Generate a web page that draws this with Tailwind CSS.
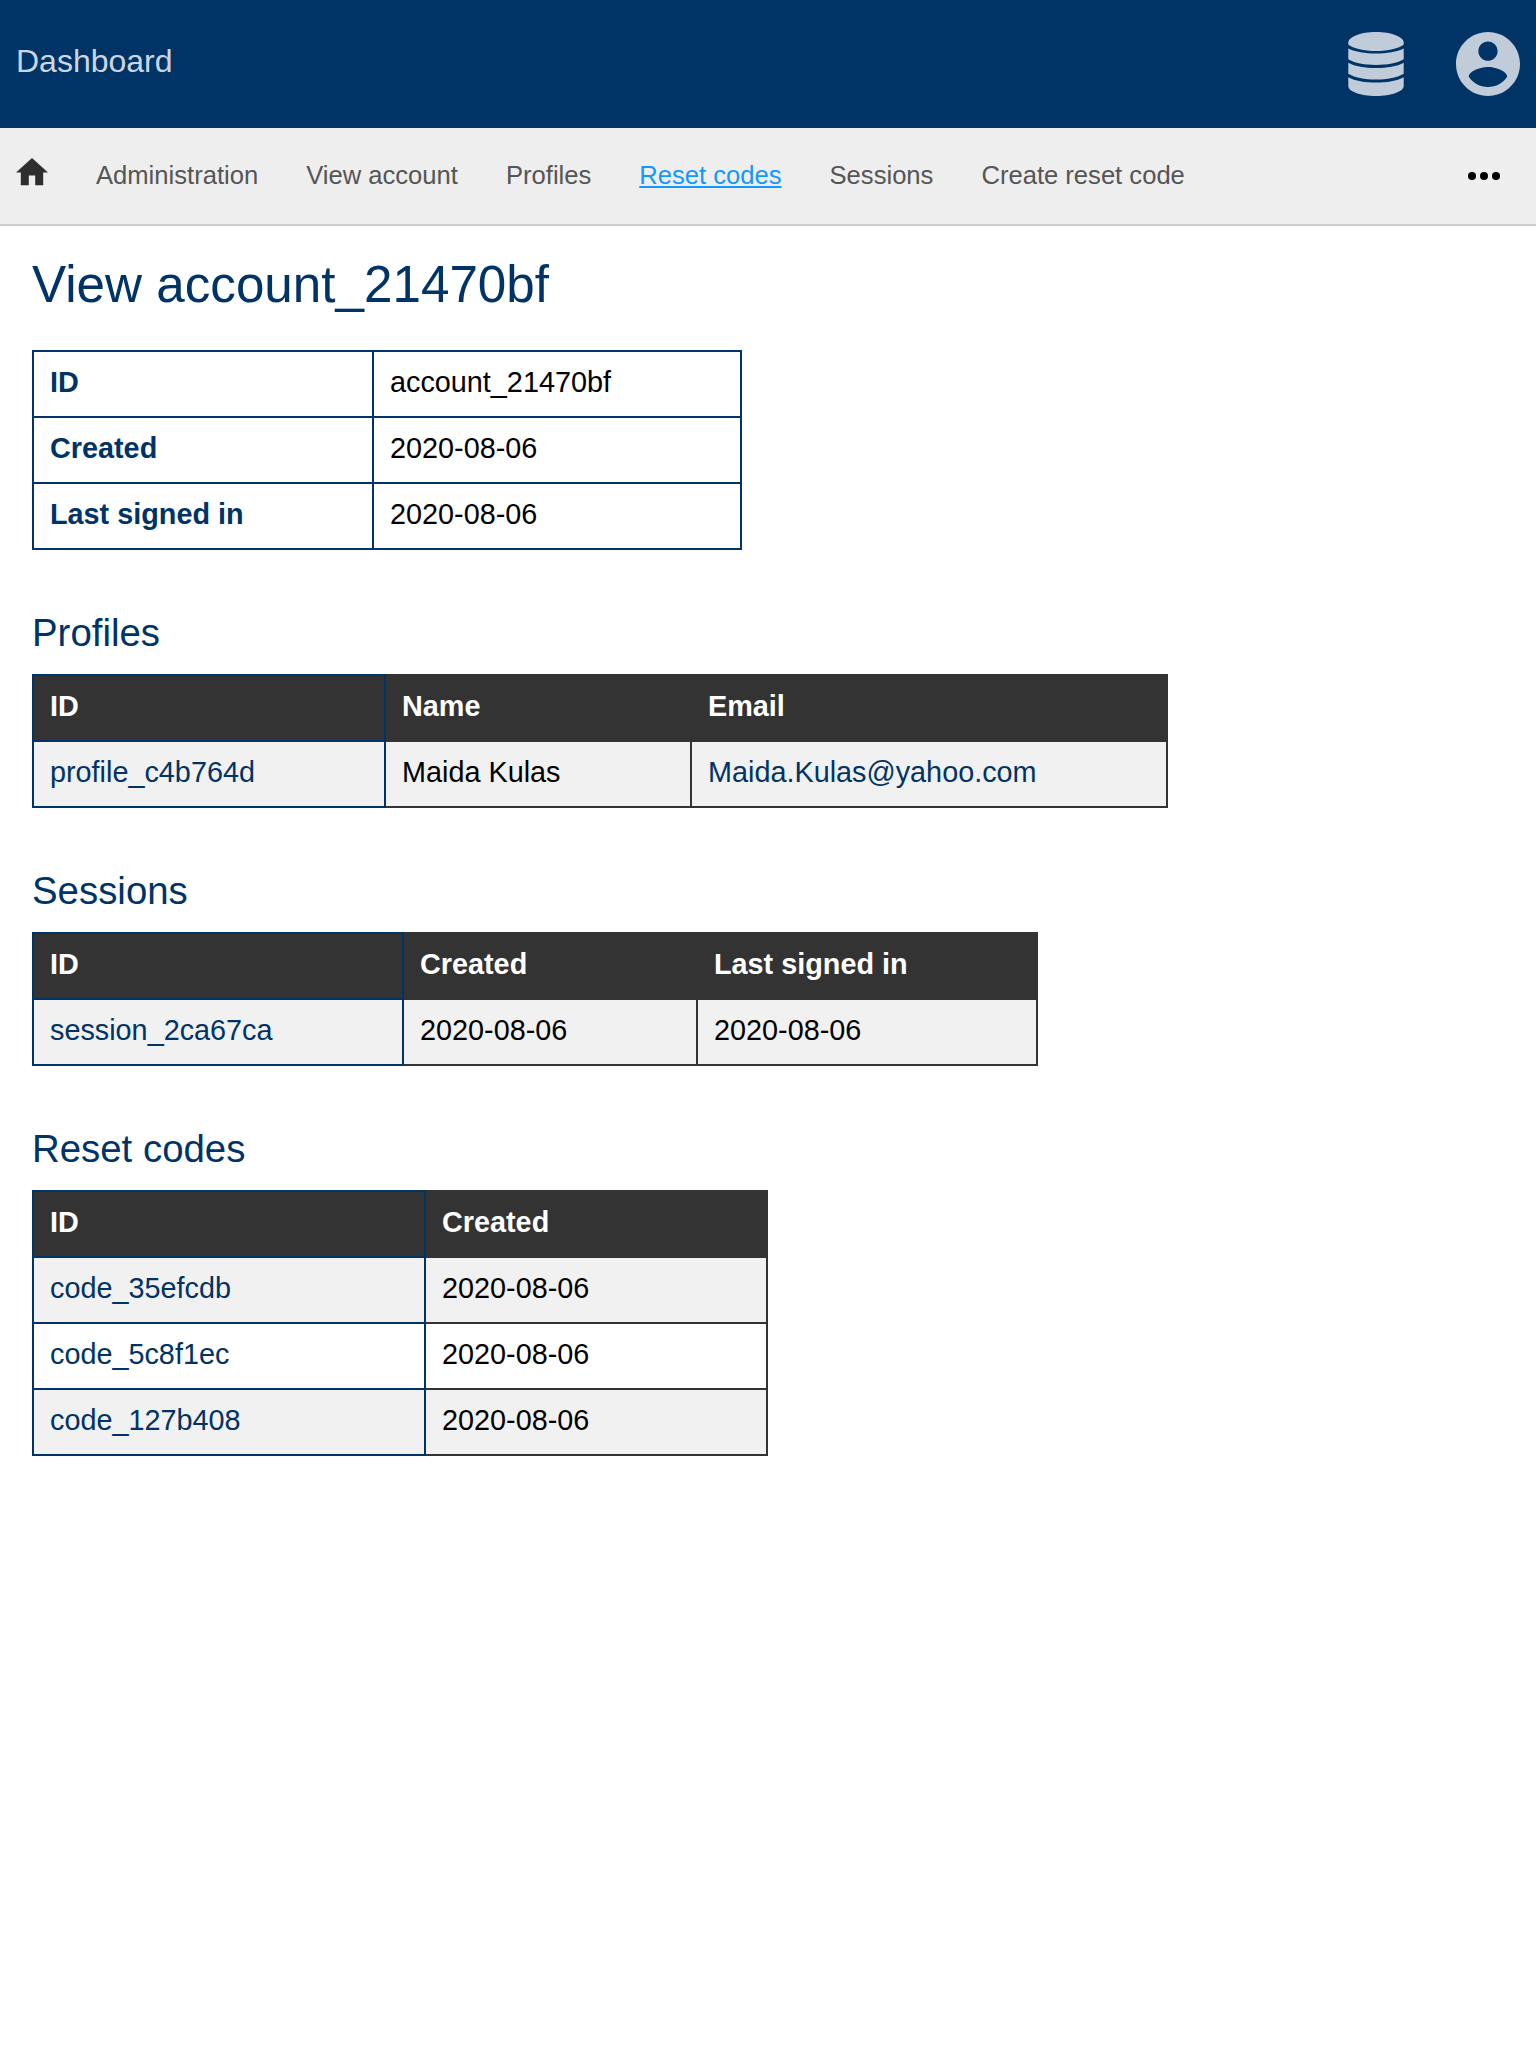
<!DOCTYPE html>
<html lang="en">
<head>
<meta charset="utf-8">
<title>Dashboard</title>
<script src="https://cdn.jsdelivr.net/npm/@tailwindcss/browser@4"></script>
</head>
<body class="bg-white font-['Liberation_Sans',Arial,sans-serif] text-black">
<header class="flex h-32 items-center justify-between bg-[#003366] px-4">
  <a class="pb-1.5 text-[32px] leading-9 text-[#ccd6e0]">Dashboard</a>
  <div class="flex items-center gap-[52px] text-[#c0ccd9]">
    <svg class="h-16 w-14" viewBox="0 0 56 64" fill="currentColor">
      <path d="M28 0C43.500 0 55.700 5 55.700 10.500V12.500C51 16.500 40 19 28 19S5 16.500 .3 12.500V10.500C.3 5 12.500 0 28 0Z"/>
      <path d="M.3 16.500C7 20 17 21.500 28 21.500S49 20 55.700 16.500V27.300C50 31 39 33 28 33S6 31 .3 27.300Z"/>
      <path d="M.3 30.800C7 34.500 17 36 28 36S49 34.500 55.700 30.800V41.700C50 45.500 39 47.500 28 47.500S6 45.500 .3 41.700Z"/>
      <path d="M.3 45.200C7 49 17 50.500 28 50.500S49 49 55.700 45.200V54C55.700 59.500 43.500 64 28 64S.3 59.500 .3 54Z"/>
    </svg>
    <svg class="size-16" viewBox="2 2 20 20" fill="currentColor"><path d="M12 2C6.480 2 2 6.480 2 12s4.480 10 10 10 10-4.480 10-10S17.520 2 12 2zm0 3c1.660 0 3 1.340 3 3s-1.340 3-3 3-3-1.340-3-3 1.340-3 3-3zm0 14.200c-2.500 0-4.710-1.280-6-3.220.03-1.990 4-3.080 6-3.080 1.990 0 5.970 1.090 6 3.080-1.290 1.940-3.500 3.220-6 3.220z"/></svg>
  </div>
</header>
<nav class="flex h-[98px] items-center gap-12 border-b-2 border-[#ccc] bg-[#eee] pr-9 pl-4 text-[25.6px] leading-8 text-[#555] [&_a]:pb-0.5">
  <svg class="mb-2 h-[27.2px] w-8 text-[#2e2e2e]" viewBox="2 3 20 17" fill="currentColor"><path d="M10 20v-6h4v6h5v-8h3L12 3 2 12h3v8z"/></svg>
  <a>Administration</a>
  <a>View account</a>
  <a>Profiles</a>
  <a class="text-[#1299ff] underline">Reset codes</a>
  <a>Sessions</a>
  <a>Create reset code</a>
  <svg class="ml-auto h-2 w-8 text-black" viewBox="0 0 32 8" fill="currentColor"><circle cx="4" cy="4" r="4"/><circle cx="16" cy="4" r="4"/><circle cx="28" cy="4" r="4"/></svg>
</nav>
<main class="px-8 pt-[29px] text-[28.8px] leading-8">
  <h1 class="mb-[35px] h-[60px] text-[51.2px] leading-[60px] text-[#003366]">View account_21470bf</h1>
  <table class="w-[710px] table-fixed border-collapse text-left [&_td]:h-[66px] [&_td]:border-2 [&_td]:border-[#003366] [&_td]:px-4 [&_td]:pb-1 [&_th]:border-2 [&_th]:border-[#003366] [&_th]:px-4 [&_th]:pb-1 [&_th]:text-[#003366]">
    <colgroup><col class="w-[340px]"><col class="w-[368px]"></colgroup>
    <tbody>
      <tr><th>ID</th><td>account_21470bf</td></tr>
      <tr><th>Created</th><td>2020-08-06</td></tr>
      <tr><th>Last signed in</th><td>2020-08-06</td></tr>
    </tbody>
  </table>

  <section class="mt-[61px]">
    <h2 class="mb-[19px] h-[44px] text-[38.4px] leading-[44px] text-[#003366]">Profiles</h2>
    <table class="w-[1136px] table-fixed border-collapse text-left [&_td]:h-[66px] [&_td]:border-2 [&_td]:border-[#333] [&_td]:px-4 [&_td]:pb-1 [&_td:first-child]:border-[#003366] [&_td:first-child]:text-[#003366] [&_th]:h-[66px] [&_th]:border-2 [&_th]:border-[#333] [&_th]:bg-[#333] [&_th]:px-4 [&_th]:pb-1 [&_th]:text-white [&_th:first-child]:border-[#003366]">
      <colgroup><col class="w-[352px]"><col class="w-[306px]"><col class="w-[476px]"></colgroup>
      <thead><tr><th>ID</th><th>Name</th><th>Email</th></tr></thead>
      <tbody><tr class="bg-[#f1f1f1]"><td>profile_c4b764d</td><td>Maida Kulas</td><td><a class="text-[#003366]">Maida.Kulas@yahoo.com</a></td></tr></tbody>
    </table>
  </section>

  <section class="mt-[61px]">
    <h2 class="mb-[19px] h-[44px] text-[38.4px] leading-[44px] text-[#003366]">Sessions</h2>
    <table class="w-[1006px] table-fixed border-collapse text-left [&_td]:h-[66px] [&_td]:border-2 [&_td]:border-[#333] [&_td]:px-4 [&_td]:pb-1 [&_td:first-child]:border-[#003366] [&_td:first-child]:text-[#003366] [&_th]:h-[66px] [&_th]:border-2 [&_th]:border-[#333] [&_th]:bg-[#333] [&_th]:px-4 [&_th]:pb-1 [&_th]:text-white [&_th:first-child]:border-[#003366]">
      <colgroup><col class="w-[370px]"><col class="w-[294px]"><col class="w-[340px]"></colgroup>
      <thead><tr><th>ID</th><th>Created</th><th>Last signed in</th></tr></thead>
      <tbody><tr class="bg-[#f1f1f1]"><td>session_2ca67ca</td><td>2020-08-06</td><td>2020-08-06</td></tr></tbody>
    </table>
  </section>

  <section class="mt-[61px]">
    <h2 class="mb-[19px] h-[44px] text-[38.4px] leading-[44px] text-[#003366]">Reset codes</h2>
    <table class="w-[736px] table-fixed border-collapse text-left [&_td]:h-[66px] [&_td]:border-2 [&_td]:border-[#333] [&_td]:px-4 [&_td]:pb-1 [&_td:first-child]:border-[#003366] [&_td:first-child]:text-[#003366] [&_th]:h-[66px] [&_th]:border-2 [&_th]:border-[#333] [&_th]:bg-[#333] [&_th]:px-4 [&_th]:pb-1 [&_th]:text-white [&_th:first-child]:border-[#003366]">
      <colgroup><col class="w-[392px]"><col class="w-[342px]"></colgroup>
      <thead><tr><th>ID</th><th>Created</th></tr></thead>
      <tbody>
        <tr class="bg-[#f1f1f1]"><td>code_35efcdb</td><td>2020-08-06</td></tr>
        <tr><td>code_5c8f1ec</td><td>2020-08-06</td></tr>
        <tr class="bg-[#f1f1f1]"><td>code_127b408</td><td>2020-08-06</td></tr>
      </tbody>
    </table>
  </section>
</main>
</body>
</html>
